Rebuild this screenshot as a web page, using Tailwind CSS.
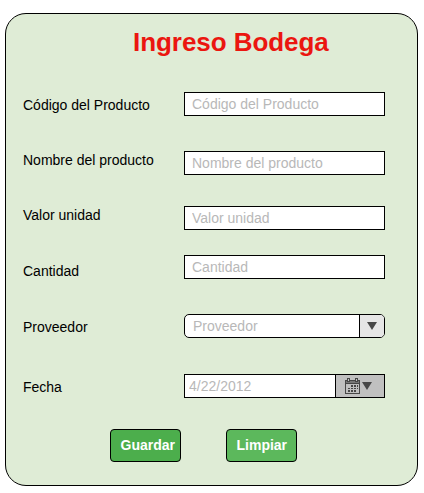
<!DOCTYPE html>
<html lang="es">
<head>
<meta charset="utf-8">
<title>Ingreso Bodega</title>
<script src="https://cdn.jsdelivr.net/npm/@tailwindcss/browser@4"></script>
</head>
<body class="bg-white overflow-hidden font-['Liberation_Sans',Arial,sans-serif]">
<form class="ml-[5px] mt-[13px] w-[413px] h-[473px] rounded-[21px] border border-black bg-[#dfecd6] text-[14px] leading-4 text-black">
  <h1 class="h-[78px] pt-[13px] pl-[127px] text-[26px] leading-[30px] tracking-[-0.05px] font-bold text-[#eb1610] whitespace-nowrap">Ingreso Bodega</h1>
  <div class="flex h-[306px] pl-[17px]">
    <div class="flex w-[161px] flex-col pt-[5px]">
      <label for="codigo" class="h-4 mb-[39px]">Código del Producto</label>
      <label for="nombre" class="h-4 mb-[39px]">Nombre del producto</label>
      <label for="valor" class="h-4 mb-10">Valor unidad</label>
      <label for="cantidad" class="h-4 mb-10">Cantidad</label>
      <label for="proveedor" class="h-4 mb-11">Proveedor</label>
      <label for="fecha" class="h-4">Fecha</label>
    </div>
    <div class="flex w-[201px] flex-col">
      <input id="codigo" placeholder="Código del Producto" class="h-6 mb-[35px] border border-black bg-white px-[7px] placeholder:text-[#b8b8b8]">
      <input id="nombre" placeholder="Nombre del producto" class="h-6 mb-[31px] border border-black bg-white px-[7px] placeholder:text-[#b8b8b8]">
      <input id="valor" placeholder="Valor unidad" class="h-6 mb-[25px] border border-black bg-white px-[7px] placeholder:text-[#b8b8b8]">
      <input id="cantidad" placeholder="Cantidad" class="h-6 mb-[35px] border border-black bg-white px-[7px] placeholder:text-[#b8b8b8]">
      <div class="flex h-6 mb-9 overflow-hidden rounded-[5px] border border-black bg-white">
        <input id="proveedor" placeholder="Proveedor" class="min-w-0 flex-1 pl-2 placeholder:text-[#b8b8b8]">
        <span class="flex w-[25px] items-center border-l border-black bg-[#e6e6e6] pl-[7px]">
          <svg class="h-2 w-2.5" viewBox="0 0 10 8"><path d="M0 0H10L5 8Z" fill="#474747"/></svg>
        </span>
      </div>
      <div class="flex h-6 border border-black bg-white">
        <input id="fecha" placeholder="4/22/2012" class="min-w-0 flex-1 pl-1 placeholder:text-[#b8b8b8]">
        <span class="flex w-[49px] items-center gap-[2px] border-l border-black bg-[#c0c0c0] pl-[9px]">
          <svg class="h-4 w-[15px]" viewBox="0 0 15 16" fill="#474747">
            <path fill-rule="evenodd" d="M0 2H15V16H0ZM1 6V15H14V6Z"/>
            <path d="M1 3H14V5H1Z" fill="#777"/>
            <path d="M2 0H5V4H2ZM10 0H13V4H10Z"/>
            <path d="M3 1H4V3H3ZM11 1H12V3H11Z" fill="#c0c0c0"/>
            <path d="M6 7h2v2H6zM9 7h2v2H9zM12 7h1v2h-1zM3 10h2v1H3zM6 10h2v1H6zM9 10h2v1H9zM12 10h1v1h-1zM3 12h2v2H3zM6 12h2v2H6zM9 12h2v2H9z"/>
          </svg>
          <svg class="h-2 w-2.5" viewBox="0 0 10 8"><path d="M0 0H10L5 8Z" fill="#474747"/></svg>
        </span>
      </div>
    </div>
  </div>
  <div class="flex gap-[45px] pl-[104px] pt-[31px]">
    <button type="button" class="h-[33px] w-[71px] rounded-[4px] border border-black bg-[#4cae4c] pb-[2px] pl-[9.5px] text-left font-bold text-white">Guardar</button>
    <button type="button" class="h-[33px] w-[71px] rounded-[4px] border border-black bg-[#5cb85c] pb-[2px] pl-[9.5px] text-left font-bold text-white">Limpiar</button>
  </div>
</form>
</body>
</html>
